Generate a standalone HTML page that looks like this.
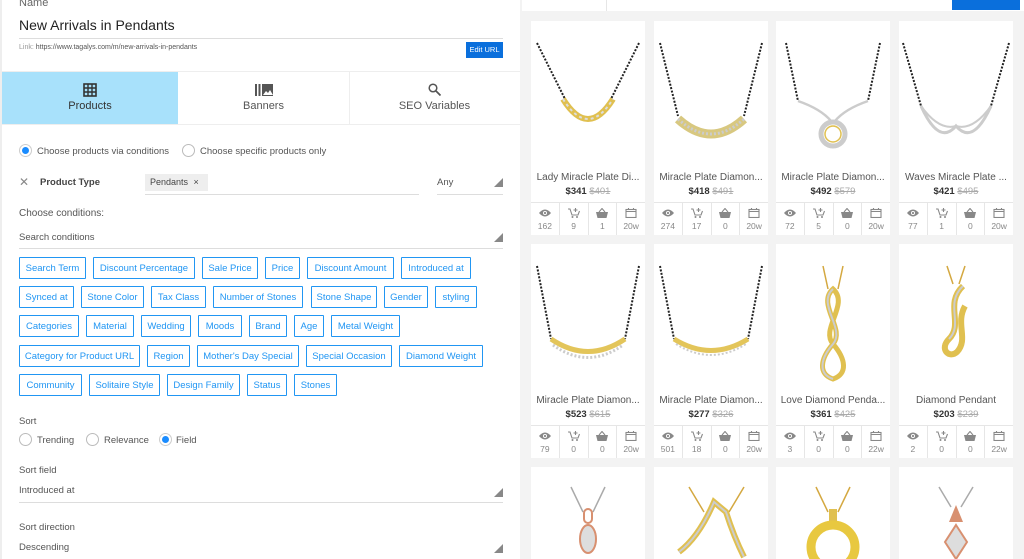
<!DOCTYPE html>
<html><head><meta charset="utf-8">
<style>
*{box-sizing:border-box;margin:0;padding:0}
html,body{width:1024px;height:559px;overflow:hidden}
body{background:#f3f3f3;font-family:"Liberation Sans",sans-serif;position:relative;color:#333}
.a{position:absolute}
#left{left:0;top:0;width:520px;height:559px;background:#fff}
#lb{left:0;top:0;width:2px;height:559px;background:#eee}
.chip{position:absolute;height:22px;border:1px solid #2196f3;color:#2196f3;font-size:9.5px;line-height:21px;text-align:center;white-space:nowrap;border-radius:1px}
.lbl{font-size:9.5px;color:#555}
.radio{position:absolute;width:13px;height:13px;border:1px solid #bbb;border-radius:50%;background:#fff}
.radio.on{border-color:#ccc}
.radio.on::after{content:"";position:absolute;left:2px;top:2px;width:7px;height:7px;border-radius:50%;background:#1a8cff}
.line{position:absolute;height:1px;background:#ddd}
.tri{position:absolute;width:0;height:0;border-left:9px solid transparent;border-bottom:9px solid #888}
.card{position:absolute;width:114px;height:214px;background:#fff;overflow:hidden}
.card.s{height:92px}
.card .t{position:absolute;left:0;right:0;top:151px;text-align:center;font-size:10px;color:#555;white-space:nowrap}
.card .p{position:absolute;left:0;right:0;top:165px;text-align:center;font-size:9.5px;color:#333}
.card .p b{font-weight:bold}
.card .p s{color:#aaa;font-weight:normal}
.st{position:absolute;left:0;right:0;top:181px;height:33px;border-top:1px solid #e6e6e6;display:flex}
.st div{flex:1;border-right:1px solid #e6e6e6;text-align:center;font-size:8.5px;color:#888;padding-top:5px;line-height:10px}
.st div:last-child{border-right:none}
.st svg{display:block;margin:0 auto 3px}
.img{position:absolute;left:0;top:0}
</style></head><body>
<svg width="0" height="0" style="position:absolute">
<defs>
<symbol id="eye" viewBox="0 0 12 10"><path d="M0 5 Q6 -2 12 5 Q6 12 0 5Z" fill="#888"/><circle cx="6" cy="5" r="2" fill="#fff"/><circle cx="6" cy="5" r="1.1" fill="#888"/></symbol>
<symbol id="cart" viewBox="0 0 12 10"><path d="M0 1h2l2 6h6l1.5-4" fill="none" stroke="#888" stroke-width="1.1"/><circle cx="4.5" cy="9" r="1" fill="#888"/><circle cx="9" cy="9" r="1" fill="#888"/><path d="M7.5 0v4M5.5 2h4" stroke="#888" stroke-width="1.1"/></symbol>
<symbol id="bask" viewBox="0 0 12 10"><path d="M3 4 L6 0.5 L9 4" fill="none" stroke="#888" stroke-width="1.1"/><path d="M0 4h12l-1.5 6h-9z" fill="#888"/></symbol>
<symbol id="cal" viewBox="0 0 12 10"><rect x="1" y="1.5" width="10" height="8" fill="none" stroke="#888" stroke-width="1.1"/><path d="M1 3.5h10M3.5 0v2M8.5 0v2" stroke="#888" stroke-width="1.1"/></symbol>
</defs></svg>
<div id="left" class="a">
<div class="a" id="lb"></div>
<div class="a" style="left:19px;top:-3px;font-size:11px;color:#666">Name</div>
<div class="a" style="left:19px;top:17px;font-size:14px;color:#222">New Arrivals in Pendants</div>
<div class="line" style="left:19px;top:38px;width:484px"></div>
<div class="a" style="left:19px;top:44px;font-size:7px;color:#999">Link: <span style="color:#555">https://www.tagalys.com/m/new-arrivals-in-pendants</span></div>
<div class="a" style="left:466px;top:42px;width:37px;height:16px;background:#0a6fdc;color:#fff;font-size:7.5px;line-height:16px;text-align:center">Edit URL</div>
<div class="line" style="left:0;top:71px;width:520px;background:#eee"></div>
<div class="a" style="left:2px;top:72px;width:176px;height:52px;background:#a8e1fb"></div>
<div class="line" style="left:349px;top:72px;width:1px;height:52px;background:#eee"></div>
<div class="line" style="left:0;top:124px;width:520px;background:#eee"></div>
<svg class="a" style="left:83px;top:83px" width="14" height="14" viewBox="0 0 14 14"><rect x="1" y="1" width="12" height="12" fill="none" stroke="#333" stroke-width="1.6"/><path d="M5 1v12M9 1v12M1 5h12M1 9h12" stroke="#333" stroke-width="1.4"/></svg>
<div class="a" style="left:2px;width:176px;top:100px;text-align:center;font-size:11px;color:#333">Products</div>
<svg class="a" style="left:255px;top:84px" width="18" height="12" viewBox="0 0 18 12"><rect x="0" y="0" width="2" height="12" fill="#555"/><rect x="3.5" y="0" width="2" height="12" fill="#555"/><rect x="7" y="0" width="11" height="12" fill="#555"/><path d="M8 11l3-4 2 2 2-3 3 5z" fill="#fff"/></svg>
<div class="a" style="left:178px;width:171px;top:100px;text-align:center;font-size:11px;color:#555">Banners</div>
<svg class="a" style="left:428px;top:83px" width="13" height="13" viewBox="0 0 13 13"><circle cx="5" cy="5" r="3.8" fill="none" stroke="#555" stroke-width="1.5"/><path d="M8 8l4.5 4.5" stroke="#555" stroke-width="1.7"/></svg>
<div class="a" style="left:349px;width:171px;top:100px;text-align:center;font-size:11px;color:#555">SEO Variables</div>

<div class="radio on" style="left:19px;top:144px"></div>
<div class="a lbl" style="left:37px;top:146px">Choose products via conditions</div>
<div class="radio" style="left:182px;top:144px"></div>
<div class="a lbl" style="left:200px;top:146px">Choose specific products only</div>

<div class="a" style="left:19px;top:175px;font-size:12px;color:#888;line-height:14px">✕</div>
<div class="a" style="left:40px;top:177px;font-size:9.5px;color:#444;font-weight:bold">Product Type</div>
<div class="a" style="left:145px;top:174px;width:63px;height:17px;background:#eee;font-size:9px;color:#444;line-height:17px;padding-left:5px">Pendants <span style="margin-left:3px">×</span></div>
<div class="line" style="left:145px;top:194px;width:274px"></div>
<div class="a lbl" style="left:437px;top:177px">Any</div>
<div class="tri" style="left:494px;top:178px"></div>
<div class="line" style="left:437px;top:194px;width:66px"></div>

<div class="a lbl" style="left:19px;top:208px;font-size:10px">Choose conditions:</div>
<div class="a lbl" style="left:19px;top:232px">Search conditions</div>
<div class="tri" style="left:494px;top:233px"></div>
<div class="line" style="left:19px;top:248px;width:484px"></div>

<div class="chip" style="left:19px;top:257px;width:67px">Search Term</div>
<div class="chip" style="left:93px;top:257px;width:102px">Discount Percentage</div>
<div class="chip" style="left:202px;top:257px;width:56px">Sale Price</div>
<div class="chip" style="left:265px;top:257px;width:35px">Price</div>
<div class="chip" style="left:307px;top:257px;width:87px">Discount Amount</div>
<div class="chip" style="left:401px;top:257px;width:70px">Introduced at</div>

<div class="chip" style="left:19px;top:286px;width:55px">Synced at</div>
<div class="chip" style="left:81px;top:286px;width:63px">Stone Color</div>
<div class="chip" style="left:151px;top:286px;width:55px">Tax Class</div>
<div class="chip" style="left:213px;top:286px;width:90px">Number of Stones</div>
<div class="chip" style="left:311px;top:286px;width:66px">Stone Shape</div>
<div class="chip" style="left:384px;top:286px;width:44px">Gender</div>
<div class="chip" style="left:435px;top:286px;width:42px">styling</div>

<div class="chip" style="left:19px;top:315px;width:60px">Categories</div>
<div class="chip" style="left:86px;top:315px;width:48px">Material</div>
<div class="chip" style="left:141px;top:315px;width:50px">Wedding</div>
<div class="chip" style="left:198px;top:315px;width:44px">Moods</div>
<div class="chip" style="left:249px;top:315px;width:38px">Brand</div>
<div class="chip" style="left:294px;top:315px;width:30px">Age</div>
<div class="chip" style="left:331px;top:315px;width:69px">Metal Weight</div>

<div class="chip" style="left:19px;top:345px;width:121px">Category for Product URL</div>
<div class="chip" style="left:147px;top:345px;width:43px">Region</div>
<div class="chip" style="left:197px;top:345px;width:102px">Mother's Day Special</div>
<div class="chip" style="left:306px;top:345px;width:86px">Special Occasion</div>
<div class="chip" style="left:399px;top:345px;width:84px">Diamond Weight</div>

<div class="chip" style="left:19px;top:374px;width:63px">Community</div>
<div class="chip" style="left:89px;top:374px;width:71px">Solitaire Style</div>
<div class="chip" style="left:167px;top:374px;width:73px">Design Family</div>
<div class="chip" style="left:247px;top:374px;width:40px">Status</div>
<div class="chip" style="left:294px;top:374px;width:43px">Stones</div>

<div class="a lbl" style="left:19px;top:416px">Sort</div>
<div class="radio" style="left:19px;top:433px"></div>
<div class="a lbl" style="left:37px;top:435px">Trending</div>
<div class="radio" style="left:86px;top:433px"></div>
<div class="a lbl" style="left:104px;top:435px">Relevance</div>
<div class="radio on" style="left:159px;top:433px"></div>
<div class="a lbl" style="left:176px;top:435px">Field</div>

<div class="a lbl" style="left:19px;top:465px">Sort field</div>
<div class="a lbl" style="left:19px;top:485px">Introduced at</div>
<div class="tri" style="left:494px;top:488px"></div>
<div class="line" style="left:19px;top:502px;width:484px"></div>
<div class="a lbl" style="left:19px;top:522px">Sort direction</div>
<div class="a lbl" style="left:19px;top:542px">Descending</div>
<div class="tri" style="left:494px;top:544px"></div>
</div>

<div class="a" style="left:522px;top:0;width:502px;height:11px;background:#fff"></div>
<div class="a" style="left:606px;top:0;width:1px;height:11px;background:#e6e6e6"></div>
<div class="a" style="left:952px;top:0;width:68px;height:10px;background:#0a6fdc"></div>

<div class="card" style="left:531px;top:21px">
<svg class="img" width="114" height="140" viewBox="0 0 114 140"><path d="M6 22 L35 80 M108 22 L79 80" stroke="#222" stroke-width="2" stroke-dasharray="2 1.5"/><path d="M32 78 Q57 118 82 78" fill="none" stroke="#e0c050" stroke-width="6"/><path d="M32 78 Q57 118 82 78" fill="none" stroke="#ddd" stroke-width="2" stroke-dasharray="3 3"/></svg>
<div class="t">Lady Miracle Plate Di...</div><div class="p"><b>$341</b> <s>$401</s></div>
<div class="st"><div><svg width="12" height="10"><use href="#eye"/></svg>162</div><div><svg width="12" height="10"><use href="#cart"/></svg>9</div><div><svg width="12" height="10"><use href="#bask"/></svg>1</div><div><svg width="12" height="10"><use href="#cal"/></svg>20w</div></div></div>
<div class="card" style="left:654px;top:21px">
<svg class="img" width="114" height="140" viewBox="0 0 114 140"><path d="M6 22 L24 95 M108 22 L90 95" stroke="#222" stroke-width="2" stroke-dasharray="2 1.5"/><path d="M24 98 Q57 128 90 98" fill="none" stroke="#d8c880" stroke-width="9"/><path d="M24 98 Q57 128 90 98" fill="none" stroke="#ccc" stroke-width="3" stroke-dasharray="2 2"/></svg>
<div class="t">Miracle Plate Diamon...</div><div class="p"><b>$418</b> <s>$491</s></div>
<div class="st"><div><svg width="12" height="10"><use href="#eye"/></svg>274</div><div><svg width="12" height="10"><use href="#cart"/></svg>17</div><div><svg width="12" height="10"><use href="#bask"/></svg>0</div><div><svg width="12" height="10"><use href="#cal"/></svg>20w</div></div></div>
<div class="card" style="left:776px;top:21px">
<svg class="img" width="114" height="140" viewBox="0 0 114 140"><path d="M10 22 L22 80 M104 22 L92 80" stroke="#222" stroke-width="2" stroke-dasharray="2 1.5"/><path d="M22 80 Q45 88 55 100 M92 80 Q69 88 59 100" fill="none" stroke="#ccc" stroke-width="2.5"/><circle cx="57" cy="113" r="12" fill="none" stroke="#ccc" stroke-width="5"/><circle cx="57" cy="113" r="8" fill="none" stroke="#e0c050" stroke-width="1.5"/></svg>
<div class="t">Miracle Plate Diamon...</div><div class="p"><b>$492</b> <s>$579</s></div>
<div class="st"><div><svg width="12" height="10"><use href="#eye"/></svg>72</div><div><svg width="12" height="10"><use href="#cart"/></svg>5</div><div><svg width="12" height="10"><use href="#bask"/></svg>0</div><div><svg width="12" height="10"><use href="#cal"/></svg>20w</div></div></div>
<div class="card" style="left:899px;top:21px">
<svg class="img" width="114" height="140" viewBox="0 0 114 140"><path d="M4 22 L22 85 M110 22 L92 85" stroke="#222" stroke-width="2" stroke-dasharray="2 1.5"/><path d="M22 85 Q40 125 57 105 Q74 125 92 85" fill="none" stroke="#ccc" stroke-width="3"/><path d="M22 85 Q40 110 57 105 Q74 110 92 85" fill="none" stroke="#ccc" stroke-width="2"/></svg>
<div class="t">Waves Miracle Plate ...</div><div class="p"><b>$421</b> <s>$495</s></div>
<div class="st"><div><svg width="12" height="10"><use href="#eye"/></svg>77</div><div><svg width="12" height="10"><use href="#cart"/></svg>1</div><div><svg width="12" height="10"><use href="#bask"/></svg>0</div><div><svg width="12" height="10"><use href="#cal"/></svg>20w</div></div></div>

<div class="card" style="left:531px;top:244px">
<svg class="img" width="114" height="140" viewBox="0 0 114 140"><path d="M6 22 L20 95 M108 22 L94 95" stroke="#222" stroke-width="2" stroke-dasharray="2 1.5"/><path d="M20 95 Q57 120 94 95" fill="none" stroke="#e3c55a" stroke-width="5"/><path d="M22 101 Q57 126 92 101" fill="none" stroke="#ccc" stroke-width="3" stroke-dasharray="2 2"/></svg>
<div class="t">Miracle Plate Diamon...</div><div class="p"><b>$523</b> <s>$615</s></div>
<div class="st"><div><svg width="12" height="10"><use href="#eye"/></svg>79</div><div><svg width="12" height="10"><use href="#cart"/></svg>0</div><div><svg width="12" height="10"><use href="#bask"/></svg>0</div><div><svg width="12" height="10"><use href="#cal"/></svg>20w</div></div></div>
<div class="card" style="left:654px;top:244px">
<svg class="img" width="114" height="140" viewBox="0 0 114 140"><path d="M6 22 L20 95 M108 22 L94 95" stroke="#222" stroke-width="2" stroke-dasharray="2 1.5"/><path d="M20 95 Q57 118 94 95" fill="none" stroke="#e3c55a" stroke-width="5"/><path d="M22 100 Q57 122 92 100" fill="none" stroke="#ccc" stroke-width="2" stroke-dasharray="2 2"/></svg>
<div class="t">Miracle Plate Diamon...</div><div class="p"><b>$277</b> <s>$326</s></div>
<div class="st"><div><svg width="12" height="10"><use href="#eye"/></svg>501</div><div><svg width="12" height="10"><use href="#cart"/></svg>18</div><div><svg width="12" height="10"><use href="#bask"/></svg>0</div><div><svg width="12" height="10"><use href="#cal"/></svg>20w</div></div></div>
<div class="card" style="left:776px;top:244px">
<svg class="img" width="114" height="140" viewBox="0 0 114 140"><path d="M47 22 L52 45 M67 22 L62 45" stroke="#d4a840" stroke-width="1.5"/><path d="M57 45 C40 60 70 85 57 100 C44 115 42 130 57 135 C72 130 70 115 57 100 C44 85 74 60 57 45Z" fill="none" stroke="#e0c050" stroke-width="5"/><path d="M57 45 C40 60 70 85 57 100 C44 115 42 130 57 135" fill="none" stroke="#ccc" stroke-width="2"/></svg>
<div class="t">Love Diamond Penda...</div><div class="p"><b>$361</b> <s>$425</s></div>
<div class="st"><div><svg width="12" height="10"><use href="#eye"/></svg>3</div><div><svg width="12" height="10"><use href="#cart"/></svg>0</div><div><svg width="12" height="10"><use href="#bask"/></svg>0</div><div><svg width="12" height="10"><use href="#cal"/></svg>22w</div></div></div>
<div class="card" style="left:899px;top:244px">
<svg class="img" width="114" height="140" viewBox="0 0 114 140"><path d="M48 22 L54 40 M66 22 L60 40" stroke="#d4a840" stroke-width="1.5"/><path d="M64 42 C45 60 65 80 50 95 C40 105 50 115 58 108 C70 95 56 80 66 62" fill="none" stroke="#e0c050" stroke-width="6"/><path d="M64 42 C45 60 65 80 50 95" fill="none" stroke="#ccc" stroke-width="2"/></svg>
<div class="t">Diamond Pendant</div><div class="p"><b>$203</b> <s>$239</s></div>
<div class="st"><div><svg width="12" height="10"><use href="#eye"/></svg>2</div><div><svg width="12" height="10"><use href="#cart"/></svg>0</div><div><svg width="12" height="10"><use href="#bask"/></svg>0</div><div><svg width="12" height="10"><use href="#cal"/></svg>22w</div></div></div>

<div class="card s" style="left:531px;top:467px">
<svg class="img" width="114" height="92" viewBox="0 0 114 92"><path d="M40 20 L52 45 M74 20 L62 45" stroke="#aaa" stroke-width="1.5"/><rect x="53" y="42" width="8" height="14" rx="4" fill="none" stroke="#d89070" stroke-width="2"/><ellipse cx="57" cy="72" rx="8" ry="14" fill="#ddd" stroke="#d89070" stroke-width="2"/></svg></div>
<div class="card s" style="left:654px;top:467px">
<svg class="img" width="114" height="92" viewBox="0 0 114 92"><path d="M35 20 L50 45 M90 20 L75 45" stroke="#d4a840" stroke-width="1.5"/><path d="M25 85 Q45 70 60 35 L72 45 Q80 70 90 90" fill="none" stroke="#e0c050" stroke-width="6"/><path d="M25 85 Q45 70 60 35 L72 45 Q80 70 90 90" fill="none" stroke="#ccc" stroke-width="2"/></svg></div>
<div class="card s" style="left:776px;top:467px">
<svg class="img" width="114" height="92" viewBox="0 0 114 92"><path d="M40 20 L52 45 M74 20 L62 45" stroke="#d4a840" stroke-width="1.5"/><rect x="53" y="42" width="8" height="12" fill="#e0c050"/><circle cx="57" cy="80" r="22" fill="none" stroke="#e8c840" stroke-width="9"/></svg></div>
<div class="card s" style="left:899px;top:467px">
<svg class="img" width="114" height="92" viewBox="0 0 114 92"><path d="M40 20 L52 40 M74 20 L62 40" stroke="#aaa" stroke-width="1.5"/><path d="M50 55 L57 38 L64 55Z" fill="#d89070"/><path d="M57 58 L68 75 L57 92 L46 75Z" fill="#ddd" stroke="#d89070" stroke-width="2"/></svg></div>
</body></html>
